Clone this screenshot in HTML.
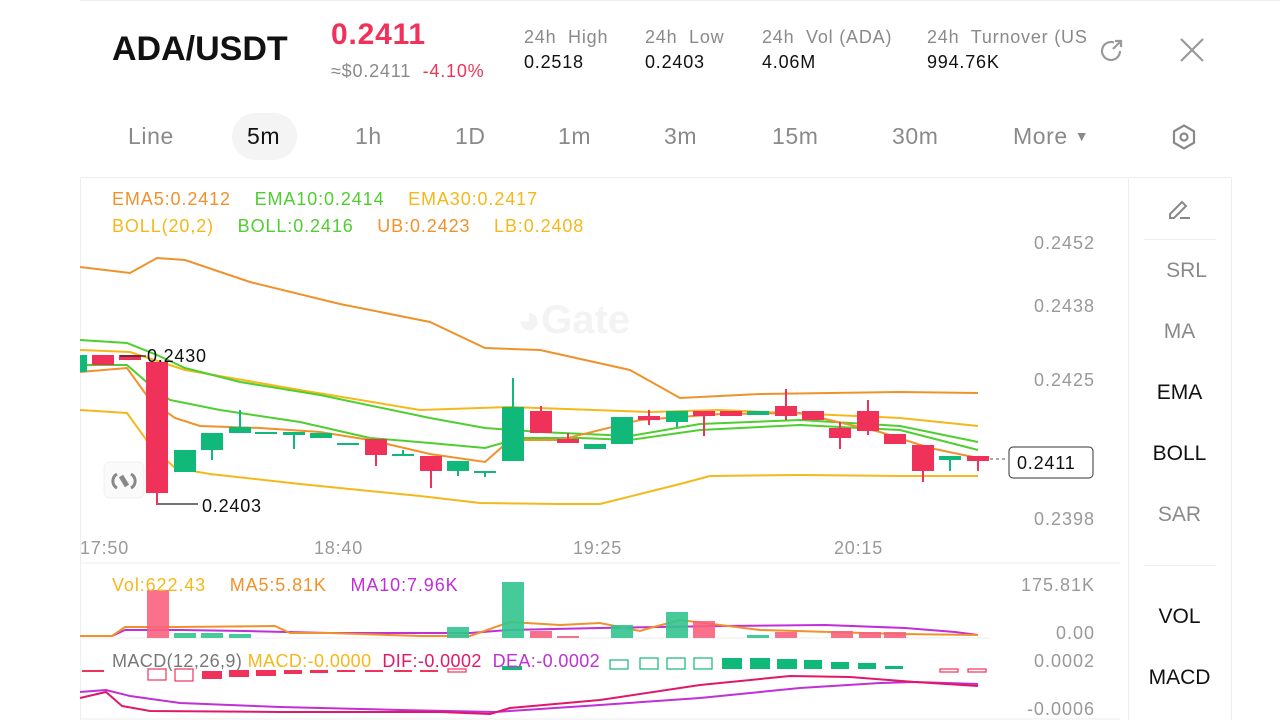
<!DOCTYPE html>
<html><head><meta charset="utf-8"><style>
body{margin:0;width:1280px;height:720px;overflow:hidden;background:#fff;font-family:"Liberation Sans",sans-serif;position:relative}
.a{position:absolute;white-space:nowrap}
.g{color:#8a8a8a}
.h{font-size:18px;letter-spacing:0.8px}
.tab{position:absolute;top:123px;font-size:23px;color:#8a8a8a;letter-spacing:0.6px}
.sb{position:absolute;left:1128px;width:103px;text-align:center;font-size:21px}
.ind{font-size:18px;letter-spacing:0.9px}
.ax{position:absolute;right:185px;font-size:18px;letter-spacing:1px;color:#999;white-space:nowrap}
.t{position:absolute;font-size:18px;letter-spacing:0.8px;color:#999;top:538px}
</style></head><body>
<div style="position:absolute;left:80px;top:0;width:1200px;height:1px;background:#eee"></div>
<div class="a" style="left:112px;top:30px;font-size:34px;font-weight:bold;color:#111">ADA/USDT</div>
<div class="a" style="left:331px;top:18px;font-size:30px;font-weight:bold;color:#f0325a;letter-spacing:0.8px">0.2411</div>
<div class="a" style="left:331px;top:61px;font-size:18px;color:#8a8a8a;letter-spacing:0.8px">≈$0.2411 <span style="color:#f0325a">&nbsp;-4.10%</span></div>
<div class="a g h" style="left:524px;top:27px">24h&nbsp; High</div>
<div class="a h" style="left:524px;top:52px;color:#111">0.2518</div>
<div class="a g h" style="left:645px;top:27px">24h&nbsp; Low</div>
<div class="a h" style="left:645px;top:52px;color:#111">0.2403</div>
<div class="a g h" style="left:762px;top:27px">24h&nbsp; Vol (ADA)</div>
<div class="a h" style="left:762px;top:52px;color:#111">4.06M</div>
<div class="a g h" style="left:927px;top:27px;width:160px;overflow:hidden">24h&nbsp; Turnover (USDT)</div>
<div class="a h" style="left:927px;top:52px;color:#111">994.76K</div>
<svg class="a" style="left:1096px;top:34px" width="32" height="32" viewBox="0 0 32 32" fill="none" stroke="#999" stroke-width="2.2"><path d="M24 17a9 9 0 1 1-6-8.5"/><path d="M17 15l8-8M19 7h6v6"/></svg>
<svg class="a" style="left:1178px;top:36px" width="28" height="28" viewBox="0 0 28 28" stroke="#999" stroke-width="2.2"><path d="M3 3l22 22M25 3L3 25"/></svg>
<div style="position:absolute;left:232px;top:113px;width:65px;height:47px;border-radius:24px;background:#f4f4f4"></div>
<div class="tab" style="left:128px">Line</div>
<div class="tab" style="left:247px;color:#111">5m</div>
<div class="tab" style="left:355px">1h</div>
<div class="tab" style="left:455px">1D</div>
<div class="tab" style="left:558px">1m</div>
<div class="tab" style="left:664px">3m</div>
<div class="tab" style="left:772px">15m</div>
<div class="tab" style="left:892px">30m</div>
<div class="tab" style="left:1013px">More <span style="font-size:14px;position:relative;top:-3px">▼</span></div>
<svg class="a" style="left:1170px;top:123px" width="28" height="28" viewBox="0 0 28 28" fill="none" stroke="#888" stroke-width="2.2"><path d="M14 2.5l10 5.75v11.5L14 25.5 4 19.75V8.25z"/><circle cx="14" cy="14" r="3.5"/></svg>
<div style="position:absolute;left:80px;top:177px;width:1152px;height:1px;background:#eee"></div>
<div style="position:absolute;left:1128px;top:178px;width:1px;height:542px;background:#eee"></div>
<div style="position:absolute;left:1231px;top:178px;width:1px;height:542px;background:#eee"></div>
<div style="position:absolute;left:80px;top:178px;width:1px;height:542px;background:#eee"></div>
<svg class="a" style="left:1166px;top:195px" width="28" height="28" viewBox="0 0 28 28" fill="none" stroke="#888" stroke-width="2"><path d="M4 23v-4L16 7l4 4-12 12zM14 23h10"/></svg>
<div style="position:absolute;left:1144px;top:239px;width:72px;height:1px;background:#eee"></div>
<div style="position:absolute;left:1144px;top:565px;width:72px;height:1px;background:#eee"></div>
<div class="sb" style="top:259px;color:#8a8a8a;left:1135px">SRL</div>
<div class="sb" style="top:320px;color:#8a8a8a">MA</div>
<div class="sb" style="top:381px;color:#111">EMA</div>
<div class="sb" style="top:442px;color:#111">BOLL</div>
<div class="sb" style="top:503px;color:#8a8a8a">SAR</div>
<div class="sb" style="top:605px;color:#111">VOL</div>
<div class="sb" style="top:666px;color:#111">MACD</div>
<div class="a ind" style="left:112px;top:189px"><span style="color:#f0922b">EMA5:0.2412</span>&nbsp;&nbsp;&nbsp;&nbsp;<span style="color:#4fcf2f">EMA10:0.2414</span>&nbsp;&nbsp;&nbsp;&nbsp;<span style="color:#f5b81b">EMA30:0.2417</span></div>
<div class="a ind" style="left:112px;top:216px"><span style="color:#f5b81b">BOLL(20,2)</span>&nbsp;&nbsp;&nbsp;&nbsp;<span style="color:#4fcf2f">BOLL:0.2416</span>&nbsp;&nbsp;&nbsp;&nbsp;<span style="color:#f0922b">UB:0.2423</span>&nbsp;&nbsp;&nbsp;&nbsp;<span style="color:#f5b81b">LB:0.2408</span></div>
<div class="ax" style="top:233px">0.2452</div>
<div class="ax" style="top:296px">0.2438</div>
<div class="ax" style="top:370px">0.2425</div>
<div class="ax" style="top:509px">0.2398</div>
<div class="t" style="left:80px">17:50</div>
<div class="t" style="left:314px">18:40</div>
<div class="t" style="left:573px">19:25</div>
<div class="t" style="left:834px">20:15</div>
<div class="a" style="left:517px;top:298px;font-size:40px;font-weight:bold;color:#f3f3f3">&#9685;Gate</div>
<svg class="a" style="left:0;top:0" width="1128" height="720">
<g fill="none" stroke-width="2">
<polyline stroke="#f0922b" points="80,267 130,273 157,258 185,260 250,282 340,304 430,322 485,348 540,350 630,370 680,398 760,394 900,392 978,393"/>
<polyline stroke="#f5b81b" points="80,350 130,352 185,370 300,390 420,410 510,407 650,412 720,410 900,418 978,426"/>
<polyline stroke="#4fcf2f" points="80,340 127,343 157,355 185,368 240,382 320,395 430,418 485,428 540,432 630,436 700,424 800,420 900,426 978,442"/>
<polyline stroke="#4fcf2f" points="80,365 127,365 150,385 170,400 220,410 300,422 370,438 430,443 485,448 520,438 580,438 630,440 700,430 800,425 900,430 978,450"/>
<polyline stroke="#f0922b" points="80,372 127,368 150,400 175,418 200,426 260,428 320,432 370,440 430,454 485,462 510,440 560,440 640,420 720,414 800,413 880,432 930,448 978,458"/>
<polyline stroke="#f5b81b" points="80,410 127,413 150,445 175,468 210,474 300,484 420,496 480,503 560,504 600,504 680,484 710,476 800,475 900,476 978,476"/>
<polyline stroke="#c02fd8" points="80,636 112,636 125,630 180,630 245,631 330,633 470,633 508,630 600,628 720,626 825,625 905,628 955,632 978,635"/>
<polyline stroke="#f0922b" points="80,636 112,636 125,627 180,627 175,627 275,626 290,633 330,633 420,636 470,636 510,622 560,625 600,623 640,631 650,628 680,620 760,630 900,634 978,635"/>
<polyline stroke="#c02fd8" points="80,692 106,690 130,696 180,703 280,707 400,710 495,712 600,705 700,698 800,688 880,683 915,682 978,684"/>
<polyline stroke="#e0186a" points="80,698 106,692 122,706 150,711 280,712 440,712 490,714 510,708 600,700 700,685 790,676 850,677 915,682 978,686"/>
</g>
<line x1="80" y1="563" x2="1120" y2="563" stroke="#eee"/>
<line x1="80" y1="638" x2="990" y2="638" stroke="#eee"/>
<line x1="80" y1="719" x2="1120" y2="719" stroke="#eee"/>
<g fill="#f0325a">
<rect x="92" y="355" width="22" height="10"/><rect x="119" y="355" width="22" height="5"/><rect x="146" y="362" width="22" height="131"/>
<rect x="156" y="490" width="2" height="15"/>
<rect x="365" y="439" width="22" height="16"/><rect x="375" y="455" width="2" height="11"/>
<rect x="420" y="456" width="22" height="15"/><rect x="430" y="470" width="2" height="18"/>
<rect x="530" y="411" width="22" height="22"/><rect x="540" y="406" width="2" height="5"/>
<rect x="557" y="439" width="22" height="4"/><rect x="567" y="433" width="2" height="6"/>
<rect x="638" y="416" width="22" height="4"/><rect x="648" y="410" width="2" height="15"/>
<rect x="693" y="411" width="22" height="5"/><rect x="703" y="416" width="2" height="20"/>
<rect x="720" y="411" width="22" height="5"/>
<rect x="775" y="406" width="22" height="10"/><rect x="785" y="389" width="2" height="31"/>
<rect x="802" y="411" width="22" height="9"/>
<rect x="829" y="428" width="22" height="10"/><rect x="839" y="422" width="2" height="27"/>
<rect x="857" y="411" width="22" height="20"/><rect x="867" y="400" width="2" height="35"/>
<rect x="884" y="434" width="22" height="10"/>
<rect x="912" y="445" width="22" height="26"/><rect x="922" y="470" width="2" height="12"/>
<rect x="967" y="456" width="22" height="5"/><rect x="977" y="460" width="2" height="11"/>
</g>
<g fill="#10b97a">
<rect x="80" y="355" width="7" height="17"/>
<rect x="174" y="450" width="22" height="22"/>
<rect x="201" y="433" width="22" height="17"/><rect x="211" y="450" width="2" height="10"/>
<rect x="229" y="427" width="22" height="6"/><rect x="239" y="410" width="2" height="17"/>
<rect x="255" y="432" width="22" height="2"/>
<rect x="283" y="432" width="22" height="3"/><rect x="293" y="434" width="2" height="15"/>
<rect x="310" y="433" width="22" height="5"/>
<rect x="337" y="443" width="22" height="2"/>
<rect x="392" y="454" width="22" height="2"/><rect x="402" y="450" width="2" height="5"/>
<rect x="447" y="461" width="22" height="10"/><rect x="457" y="471" width="2" height="5"/>
<rect x="474" y="471" width="22" height="2"/><rect x="484" y="472" width="2" height="5"/>
<rect x="502" y="407" width="22" height="54"/><rect x="512" y="378" width="2" height="30"/>
<rect x="584" y="444" width="22" height="5"/>
<rect x="611" y="417" width="22" height="27"/>
<rect x="666" y="411" width="22" height="11"/><rect x="676" y="421" width="2" height="6"/>
<rect x="747" y="411" width="22" height="4"/>
<rect x="939" y="456" width="22" height="4"/><rect x="949" y="459" width="2" height="12"/>
</g>
<path d="M120 356h26M158 504h40" stroke="#222" stroke-width="1.3"/>
<path d="M990 459h18" stroke="#555" stroke-dasharray="3 3"/>
<rect x="1009" y="447" width="84" height="31" rx="4" fill="#fff" stroke="#333"/>
<text x="1017" y="469" font-size="18" fill="#111" font-family="Liberation Sans" letter-spacing="0.8">0.2411</text>
<text x="147" y="362" font-size="18" fill="#111" font-family="Liberation Sans" letter-spacing="0.8">0.2430</text>
<text x="202" y="512" font-size="18" fill="#111" font-family="Liberation Sans" letter-spacing="0.8">0.2403</text>
<rect x="104" y="462" width="40" height="36" rx="6" fill="#fafafa" stroke="#f0f0f0"/>
<g fill="none" stroke="#888" stroke-width="3"><path d="M117 474a8 8 0 0 0 0 14M131 474a8 8 0 0 1 0 14"/><path d="M121 476l6 10" stroke-width="5"/></g>
<g fill="#f8627e" opacity=".9">
<rect x="147" y="590" width="22" height="48"/><rect x="530" y="631" width="22" height="7"/><rect x="557" y="636" width="22" height="2"/>
<rect x="693" y="621" width="22" height="17"/><rect x="775" y="632" width="22" height="6"/><rect x="831" y="631" width="22" height="7"/><rect x="859" y="632" width="22" height="6"/><rect x="884" y="632" width="22" height="6"/>
</g>
<g fill="#33c590" opacity=".9">
<rect x="174" y="633" width="22" height="5"/><rect x="201" y="633" width="22" height="5"/><rect x="229" y="634" width="22" height="4"/>
<rect x="447" y="627" width="22" height="11"/><rect x="502" y="582" width="22" height="56"/><rect x="611" y="625" width="22" height="13"/><rect x="666" y="612" width="22" height="26"/><rect x="747" y="635" width="22" height="3"/>
</g>
<g fill="#f0325a"><rect x="202" y="671" width="20" height="8"/><rect x="229" y="670" width="20" height="7"/><rect x="256" y="670" width="20" height="6"/><rect x="284" y="670" width="18" height="4"/><rect x="310" y="670" width="18" height="3"/><rect x="82" y="670" width="22" height="2"/><rect x="337" y="670" width="18" height="2"/><rect x="365" y="670" width="18" height="2"/><rect x="394" y="670" width="18" height="2"/><rect x="420" y="670" width="18" height="2"/></g>
<g fill="none" stroke="#f0325a" stroke-width="1.2"><rect x="148" y="669" width="18" height="11"/><rect x="175" y="669" width="18" height="12"/><rect x="448" y="669" width="18" height="3"/><rect x="940" y="669" width="18" height="3"/><rect x="968" y="669" width="18" height="3"/></g>
<g fill="none" stroke="#10b97a" stroke-width="1.2"><rect x="640" y="658" width="18" height="11"/><rect x="667" y="658" width="18" height="11"/><rect x="694" y="658" width="18" height="11"/><rect x="610" y="660" width="18" height="9"/></g>
<g fill="#10b97a"><rect x="502" y="666" width="20" height="4"/><rect x="722" y="658" width="20" height="11"/><rect x="750" y="658" width="20" height="11"/><rect x="777" y="659" width="20" height="10"/><rect x="804" y="660" width="18" height="9"/><rect x="831" y="662" width="18" height="7"/><rect x="858" y="663" width="18" height="6"/><rect x="885" y="666" width="18" height="3"/></g>
</svg>
<div class="a ind" style="left:112px;top:575px"><span style="color:#f5b81b">Vol:622.43</span>&nbsp;&nbsp;&nbsp;&nbsp;<span style="color:#f0922b">MA5:5.81K</span>&nbsp;&nbsp;&nbsp;&nbsp;<span style="color:#c02fd8">MA10:7.96K</span></div>
<div class="a ind" style="left:112px;top:651px;letter-spacing:0.4px"><span style="color:#777">MACD(12,26,9)</span>&nbsp;<span style="color:#f5b81b">MACD:-0.0000</span>&nbsp;&nbsp;<span style="color:#e0186a">DIF:-0.0002</span>&nbsp;&nbsp;<span style="color:#c02fd8">DEA:-0.0002</span></div>
<div class="ax" style="top:575px">175.81K</div>
<div class="ax" style="top:623px">0.00</div>
<div class="ax" style="top:651px">0.0002</div>
<div class="ax" style="top:699px">-0.0006</div>
</body></html>
